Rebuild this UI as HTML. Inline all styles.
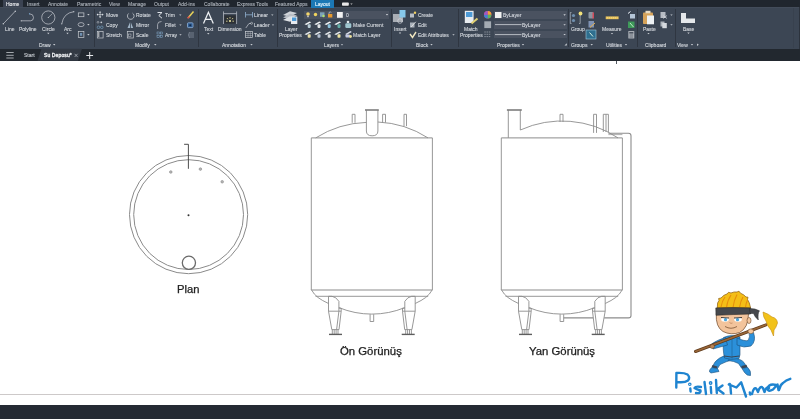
<!DOCTYPE html>
<html><head><meta charset="utf-8">
<style>
*{margin:0;padding:0;box-sizing:border-box}
html,body{width:800px;height:419px;overflow:hidden;background:#fff;font-family:"Liberation Sans",sans-serif}
#tabs{position:absolute;left:0;top:0;width:800px;height:7.5px;background:#20262e}
#ribbon{position:absolute;left:0;top:7px;width:800px;height:41.5px;background:#3c4654;border-top:1px solid #434c5a}
#ftabs{position:absolute;left:0;top:48.5px;width:800px;height:12.7px;background:#22282f}
#status{position:absolute;left:0;top:405px;width:800px;height:14px;background:#242a33}
.t{position:absolute;white-space:nowrap;color:#d6dae0;font-size:5.4px;line-height:7px;will-change:transform;-webkit-text-stroke:0.12px currentColor}
.sep{position:absolute;top:9px;width:1px;height:40px;background:#313846}
svg{position:absolute;left:0;top:0}
.lbl{position:absolute;white-space:nowrap;color:#222;font-size:10px;line-height:12px;transform-origin:0 0;-webkit-text-stroke:0.25px #222}
</style></head><body>
<div id="tabs"></div>
<div id="ribbon"></div>
<div id="ftabs"></div>
<div id="hline" style="position:absolute;left:0;top:394px;width:800px;height:1px;background:#cdc9c9"></div>
<div id="status"></div>
<div style="position:absolute;left:616px;top:61px;width:1px;height:2.5px;background:#555b63"></div>
<!--RIB-->
<div style="position:absolute;left:3px;top:0px;width:20px;height:7px;background:#3b4352;"></div>
<div style="position:absolute;left:311px;top:0px;width:22.5px;height:7.5px;background:#1b78b5;"></div>
<div style="position:absolute;left:793px;top:8px;width:1px;height:40px;background:#38414e;"></div>
<div style="position:absolute;left:798.5px;top:7px;width:1.5px;height:41.5px;background:#2c333d;"></div>
<div style="position:absolute;left:94px;top:9px;width:1px;height:38px;background:#2f3641;"></div>
<div style="position:absolute;left:197.8px;top:9px;width:1px;height:38px;background:#2f3641;"></div>
<div style="position:absolute;left:276.6px;top:9px;width:1px;height:38px;background:#2f3641;"></div>
<div style="position:absolute;left:390.8px;top:9px;width:1px;height:38px;background:#2f3641;"></div>
<div style="position:absolute;left:458.2px;top:9px;width:1px;height:38px;background:#2f3641;"></div>
<div style="position:absolute;left:567.9px;top:9px;width:1px;height:38px;background:#2f3641;"></div>
<div style="position:absolute;left:637.4px;top:9px;width:1px;height:38px;background:#2f3641;"></div>
<div style="position:absolute;left:675px;top:9px;width:1px;height:38px;background:#2f3641;"></div>
<div style="position:absolute;left:303.8px;top:11px;width:85.2px;height:7.6px;background:#4a5260;"></div>
<div style="position:absolute;left:493.6px;top:11.2px;width:73.2px;height:7.5px;background:#4a5260;"></div>
<div style="position:absolute;left:493.6px;top:21px;width:73.2px;height:7.600000000000001px;background:#4a5260;"></div>
<div style="position:absolute;left:493.6px;top:30.6px;width:73.2px;height:7.899999999999999px;background:#4a5260;"></div>
<svg id="rib" width="800" height="62" viewBox="0 0 800 62" style="position:absolute;left:0;top:0">
<rect x="342" y="2.5" width="6.8" height="3.2" rx="0.8" fill="#e8e8e8"/>
<path d="M350.3,3.4 L352.7,3.4 L351.5,4.8 Z" fill="#ccc"/>
<path d="M53.0,44.1 L55.400000000000006,44.1 L54.2,45.5 Z" fill="#c9cdd3"/>
<path d="M47.099999999999994,32.8 L49.5,32.8 L48.3,34.199999999999996 Z" fill="#c9cdd3"/>
<path d="M66.3,32.8 L68.7,32.8 L67.5,34.199999999999996 Z" fill="#c9cdd3"/>
<path d="M3.3,23.8 L15.3,11.2" stroke="#c8ccd2" stroke-width="0.7"/>
<circle cx="3.3" cy="23.8" r="0.7" fill="#c8ccd2"/><circle cx="15.3" cy="11.2" r="0.7" fill="#c8ccd2"/>
<path d="M21.2,20.8 L30.5,20.8 Q33.5,20.8 33.5,17.5 Q33.5,14 29.5,13.8" fill="none" stroke="#c8ccd2" stroke-width="0.7"/>
<circle cx="21.2" cy="20.8" r="0.6" fill="#c8ccd2"/><circle cx="29.5" cy="13.8" r="0.6" fill="#7fb2e0"/>
<circle cx="48.3" cy="17.5" r="6.6" fill="none" stroke="#c8ccd2" stroke-width="0.7"/>
<path d="M48.3,17.5 L52.5,13.5" stroke="#c8ccd2" stroke-width="0.6"/><circle cx="48.3" cy="17.5" r="0.6" fill="#c8ccd2"/>
<path d="M61.8,23.8 Q63.5,13 73.8,11.7" fill="none" stroke="#c8ccd2" stroke-width="0.7"/>
<circle cx="61.8" cy="23.8" r="0.6" fill="#c8ccd2"/><circle cx="73.8" cy="11.7" r="0.6" fill="#c8ccd2"/>
<rect x="78.3" y="12.9" width="5.6" height="3.8" fill="none" stroke="#c8ccd2" stroke-width="0.7"/>
<ellipse cx="81.1" cy="24.6" rx="3" ry="2" fill="none" stroke="#c8ccd2" stroke-width="0.7"/>
<rect x="78.3" y="31.4" width="5.6" height="6" fill="none" stroke="#c8ccd2" stroke-width="0.7"/><rect x="80" y="33" width="2.2" height="2.8" fill="#6f8fb0"/>
<path d="M87.2,14.1 L89.60000000000001,14.1 L88.4,15.5 Z" fill="#c9cdd3"/>
<path d="M87.2,24.099999999999998 L89.60000000000001,24.099999999999998 L88.4,25.5 Z" fill="#c9cdd3"/>
<path d="M87.2,34.1 L89.60000000000001,34.1 L88.4,35.5 Z" fill="#c9cdd3"/>
<path d="M179.10000000000002,14.4 L181.5,14.4 L180.3,15.8 Z" fill="#c9cdd3"/>
<path d="M179.3,24.4 L181.7,24.4 L180.5,25.8 Z" fill="#c9cdd3"/>
<path d="M179.3,34.199999999999996 L181.7,34.199999999999996 L180.5,35.599999999999994 Z" fill="#c9cdd3"/>
<path d="M154.10000000000002,44.1 L156.5,44.1 L155.3,45.5 Z" fill="#c9cdd3"/>
<path d="M100.1,11.8 L100.1,17.4 M97.2,14.6 L103,14.6" stroke="#e3e6ea" stroke-width="0.6"/><path d="M100.1,11.2 L101.3,12.6 L98.9,12.6Z M100.1,18 L101.3,16.6 L98.9,16.6Z M96.6,14.6 L98,13.4 L98,15.8Z M103.6,14.6 L102.2,13.4 L102.2,15.8Z" fill="#e3e6ea"/>
<circle cx="98" cy="22.3" r="0.9" fill="none" stroke="#c9cdd3" stroke-width="0.5"/><circle cx="101.3" cy="22.3" r="0.9" fill="#c9cdd3"/><circle cx="98.5" cy="27.3" r="1.3" fill="none" stroke="#7aa6c8" stroke-width="0.6"/><circle cx="101.8" cy="27.3" r="1.3" fill="none" stroke="#7aa6c8" stroke-width="0.6"/>
<rect x="97.3" y="31.5" width="5.8" height="6.5" fill="none" stroke="#c8ccd2" stroke-width="0.7"/><path d="M98.8,32 L98.8,37" stroke="#e0e0e0" stroke-width="0.9"/>
<path d="M132.5,13.2 A3.3,3.3 0 1,1 128.6,13.5" fill="none" stroke="#c8ccd2" stroke-width="0.8"/>
<path d="M127.5,28 L130,22.3 L130,28 Z M130.8,28 L130.8,22.3 L133.2,28 Z" fill="#9fb3c5"/>
<rect x="127.3" y="31.5" width="6" height="6.5" fill="none" stroke="#c8ccd2" stroke-width="0.7"/><rect x="128.5" y="34" width="2.5" height="2.5" fill="none" stroke="#c8ccd2" stroke-width="0.5"/>
<path d="M157.5,12.5 L162,12.5 L158.8,15.5 L162,18.2" fill="none" stroke="#dfe3e8" stroke-width="1"/>
<path d="M157.6,29 L157.6,24.5 Q157.6,21.5 161.5,21.5" fill="none" stroke="#c8ccd2" stroke-width="0.7"/>
<rect x="157" y="32" width="2.3" height="2" fill="none" stroke="#86aed0" stroke-width="0.5"/><rect x="160.3" y="32" width="2.3" height="2" fill="none" stroke="#86aed0" stroke-width="0.5"/><rect x="157" y="35.3" width="2.3" height="2" fill="none" stroke="#86aed0" stroke-width="0.5"/><rect x="160.3" y="35.3" width="2.3" height="2" fill="none" stroke="#86aed0" stroke-width="0.5"/>
<path d="M188,18 L193.5,11.5" stroke="#e7d25a" stroke-width="1.5"/><path d="M187.5,18.3 L189.5,16.5" stroke="#d94a4a" stroke-width="1.4"/>
<rect x="187.5" y="22.8" width="5.5" height="4.8" rx="0.8" fill="#2f5a8f" stroke="#9cc0e8" stroke-width="0.7"/><circle cx="190.2" cy="25.2" r="1" fill="#0f2a4a"/>
<path d="M189,33 L194,33 M188.5,35 L194,35 M189,37 L194,37" stroke="#7c8694" stroke-width="0.9"/><path d="M189.5,32 Q187.3,35 189.5,38" fill="none" stroke="#7c8694" stroke-width="0.7"/>
<path d="M203.5,23.5 L208.4,12.2 L213.3,23.5 M205.3,19.3 L211.5,19.3" fill="none" stroke="#eef1f4" stroke-width="1.25"/>
<path d="M207.10000000000002,33.0 L209.5,33.0 L208.3,34.4 Z" fill="#c9cdd3"/>
<rect x="224.3" y="15.3" width="11.5" height="8.3" fill="#2c3035"/>
<path d="M223.5,11.4 L223.5,24 M236.6,11.4 L236.6,24 M223.5,13.6 L236.6,13.6" fill="none" stroke="#b9bec5" stroke-width="0.75"/>
<path d="M230,17 L230,18.6 M227,18 L227.9,19.3 M233,18 L232.1,19.3 M226,21.2 L227.6,21.2 M234,21.2 L232.4,21.2" stroke="#e8e2a0" stroke-width="0.8"/><circle cx="230" cy="21" r="1.1" fill="#e8e2a0"/>
<path d="M245.5,12 L245.5,17.5 M252.5,12 L252.5,17.5 M245.5,14.8 L252.5,14.8" stroke="#8fb0cf" stroke-width="0.8"/>
<path d="M245.8,28 L249,23.5 L251,23.5" fill="none" stroke="#c8ccd2" stroke-width="0.7"/><circle cx="251.6" cy="23.3" r="1" fill="none" stroke="#c8ccd2" stroke-width="0.6"/>
<rect x="245.5" y="31.5" width="7" height="6" fill="none" stroke="#c8ccd2" stroke-width="0.7"/><path d="M245.5,33.5 L252.5,33.5 M245.5,35.5 L252.5,35.5 M248,31.5 L248,37.5 M250.3,31.5 L250.3,37.5" stroke="#c8ccd2" stroke-width="0.4"/>
<path d="M271.1,14.4 L273.5,14.4 L272.3,15.8 Z" fill="#c9cdd3"/>
<path d="M271.8,24.4 L274.2,24.4 L273,25.8 Z" fill="#c9cdd3"/>
<path d="M250.3,44.1 L252.7,44.1 L251.5,45.5 Z" fill="#c9cdd3"/>
<path d="M283,15 L290,11.3 L297,13 L290,16.7 Z" fill="#cfd3d8"/><path d="M283,17.5 L290,13.8 L297,15.5 L290,19.2 Z" fill="#b9bec5"/><path d="M283,20 L290,16.3 L297,18 L290,21.7 Z" fill="#dde1e5"/>
<rect x="291" y="16.5" width="6.3" height="7.5" fill="#e6eaef"/><rect x="292" y="17.5" width="4.3" height="3.5" fill="#4d9ad6"/>
<circle cx="308" cy="14" r="1.8" fill="#f4d76b"/><rect x="307.3" y="15.8" width="1.4" height="1.4" fill="#ddd"/>
<circle cx="315.5" cy="14.5" r="1.7" fill="#f0d45e"/>
<rect x="320" y="12.3" width="4.5" height="4.5" fill="#7da2b8"/><circle cx="323.5" cy="16" r="1.2" fill="#aee06a"/>
<rect x="328" y="14" width="4.3" height="3.5" fill="#e89a2e"/><path d="M329,14 L329,12.5 Q330.2,11.3 331.4,12.5" fill="none" stroke="#ddd" stroke-width="0.6"/>
<rect x="337" y="12" width="5.8" height="5.8" fill="#f2f2f2"/>
<path d="M385.8,14.0 L388.2,14.0 L387,15.4 Z" fill="#d0d4da"/>
<path d="M304.5,24.2 L309.5,21.5 L311.3,22.3 L306.3,25Z" fill="#eef1f3"/><rect x="307.7" y="24.3" width="3" height="3.6" rx="0.8" fill="#b9cdd6"/>
<path d="M304.5,34.2 L309.5,31.5 L311.3,32.3 L306.3,35Z" fill="#e3e7ea"/><rect x="307.7" y="34.3" width="3" height="3.4" rx="0.8" fill="#e6dca6"/>
<path d="M314.3,24.2 L319.3,21.5 L321.1,22.3 L316.1,25Z" fill="#eef1f3"/><rect x="317.5" y="24.3" width="3" height="3.6" rx="0.8" fill="#dfe3e6"/>
<path d="M314.3,34.2 L319.3,31.5 L321.1,32.3 L316.1,35Z" fill="#e3e7ea"/><rect x="317.5" y="34.3" width="3" height="3.4" rx="0.8" fill="#b3c0d2"/>
<path d="M324.5,24.2 L329.5,21.5 L331.3,22.3 L326.3,25Z" fill="#eef1f3"/><rect x="327.7" y="24.3" width="3" height="3.6" rx="0.8" fill="#8cc3dd"/>
<path d="M324.5,34.2 L329.5,31.5 L331.3,32.3 L326.3,35Z" fill="#e3e7ea"/><rect x="327.7" y="34.3" width="3" height="3.4" rx="0.8" fill="#d6dadd"/>
<path d="M334.3,24.2 L339.3,21.5 L341.1,22.3 L336.1,25Z" fill="#eef1f3"/><rect x="337.5" y="24.3" width="3" height="3.6" rx="0.8" fill="#63aea6"/>
<path d="M334.3,34.2 L339.3,31.5 L341.1,32.3 L336.1,35Z" fill="#e3e7ea"/><rect x="337.5" y="34.3" width="3" height="3.4" rx="0.8" fill="#ece2a0"/>
<circle cx="348" cy="22" r="1.3" fill="#dfe6ea"/><rect x="345.3" y="23.2" width="6" height="4.8" rx="1.2" fill="#9ec5cf"/><path d="M345.3,34 L350.5,31 L351.8,32 L346.5,35Z" fill="#d9dde8"/><rect x="345.5" y="34.5" width="4.5" height="3" rx="0.8" fill="#c3c8e0"/><circle cx="350.5" cy="36.5" r="1.4" fill="#eadf9a"/>
<path d="M340.8,44.199999999999996 L343.2,44.199999999999996 L342,45.599999999999994 Z" fill="#c9cdd3"/>
<rect x="393" y="14" width="10" height="8" fill="#a9aeb5"/><rect x="399.5" y="10" width="6" height="7.5" fill="#86c8ea"/><circle cx="400" cy="21" r="2.3" fill="none" stroke="#d5d9de" stroke-width="0.7"/>
<path d="M398.8,32.6 L401.2,32.6 L400,34.0 Z" fill="#c9cdd3"/>
<rect x="410" y="13.5" width="4" height="4" fill="#b8bec6"/><circle cx="415" cy="12.8" r="1.2" fill="#f0d060"/>
<rect x="410" y="22.5" width="4.5" height="5" fill="#aab1ba"/><path d="M411,27 L415.8,21.8" stroke="#e6e6e6" stroke-width="0.9"/>
<path d="M410,34 L412.5,37.5 L416,32" fill="none" stroke="#f0e6c0" stroke-width="1.4"/>
<path d="M452.3,34.199999999999996 L454.7,34.199999999999996 L453.5,35.599999999999994 Z" fill="#c9cdd3"/>
<path d="M430.3,44.1 L432.7,44.1 L431.5,45.5 Z" fill="#c9cdd3"/>
<rect x="464.8" y="10.8" width="8.8" height="12.2" fill="#e8ecf0"/><rect x="466" y="12" width="6.4" height="5" fill="#4d9ad6"/><path d="M471.5,23.5 L477.5,18.5" stroke="#e0cf70" stroke-width="2"/>
<circle cx="487.7" cy="14.8" r="3.7" fill="#d84f6a"/><path d="M487.7,14.8 L487.7,11.1 A3.7,3.7 0 0,1 491.4,14.8Z" fill="#f2a03a"/><path d="M487.7,14.8 L491.4,14.8 A3.7,3.7 0 0,1 487.7,18.5Z" fill="#5bb85b"/><path d="M487.7,14.8 L487.7,18.5 A3.7,3.7 0 0,1 484,14.8Z" fill="#3c82d8"/><path d="M487.7,14.8 L484,14.8 A3.7,3.7 0 0,1 487.7,11.1Z" fill="#9b59c8"/>
<rect x="484.3" y="21.3" width="6.8" height="6.8" fill="#a4abb3"/>
<path d="M484.3,32 L491,32 M484.3,34.3 L491,34.3 M484.3,36.6 L491,36.6" stroke="#9aa2ac" stroke-width="0.8" stroke-dasharray="1.5,0.7"/>
<path d="M563.4,14.35 L565.8000000000001,14.35 L564.6,15.75 Z" fill="#d0d4da"/>
<path d="M563.4,24.2 L565.8000000000001,24.2 L564.6,25.6 Z" fill="#d0d4da"/>
<path d="M563.4,33.949999999999996 L565.8000000000001,33.949999999999996 L564.6,35.349999999999994 Z" fill="#d0d4da"/>
<rect x="495" y="12" width="6.5" height="6" fill="#f2f2f2"/>
<path d="M495,24.6 L521.5,24.6 M495,34.6 L521.5,34.6" stroke="#d0d4da" stroke-width="0.8"/>
<path d="M521.8,44.1 L524.2,44.1 L523,45.5 Z" fill="#c9cdd3"/>
<path d="M564.5,45.5 L566.8,45.5 L566.8,43.2Z" fill="#c9cdd3"/>
<path d="M571.5,12.5 L570.3,12.5 L570.3,23.5 L571.5,23.5 M579,12.5 L580.2,12.5 L580.2,23.5 L579,23.5" fill="none" stroke="#c8ccd2" stroke-width="0.6"/>
<circle cx="573.5" cy="15.5" r="1.6" fill="#6f8fae"/><circle cx="573.5" cy="20.5" r="1.6" fill="#6f8fae"/><circle cx="580.5" cy="13.5" r="1.9" fill="#f2e27a"/>
<rect x="588.5" y="12" width="5" height="6.5" rx="1" fill="#8a94a0"/><rect x="592.5" y="12.5" width="1.5" height="6" fill="#d14a5a"/>
<rect x="588.5" y="21" width="5.5" height="6.5" fill="#7f92b3"/><path d="M590,27.5 L595,23" stroke="#e8b04a" stroke-width="1"/>
<rect x="586" y="30" width="10" height="9" fill="#2f6f8f" stroke="#9ec8de" stroke-width="0.6"/><path d="M589.5,32.5 L593,36.5" stroke="#d8f0e0" stroke-width="1"/>
<path d="M590.5,44.1 L592.9000000000001,44.1 L591.7,45.5 Z" fill="#c9cdd3"/>
<rect x="605.7" y="16.4" width="12.9" height="2.8" fill="#e9c45c"/><path d="M607,17.8 L617.5,17.8" stroke="#f8e8a8" stroke-width="0.6" stroke-dasharray="1,1"/>
<path d="M610.8,32.9 L613.2,32.9 L612,34.3 Z" fill="#c9cdd3"/>
<rect x="630" y="14" width="5" height="4.5" fill="#b5c6d8"/><path d="M628,13.5 L630.5,11.5" stroke="#e8eef5" stroke-width="1"/>
<rect x="628" y="21.5" width="6.5" height="6.5" fill="#3f9a5a"/><path d="M630,23 L633.5,27" stroke="#c8f0d0" stroke-width="0.9"/>
<rect x="628.3" y="31" width="6" height="7.5" rx="0.6" fill="#a9aeb5"/><rect x="629.3" y="32" width="4" height="1.6" fill="#4d5561"/><path d="M629.5,35 L633,35 M629.5,37 L633,37" stroke="#5d6571" stroke-width="0.8"/>
<path d="M624.8,44.1 L627.2,44.1 L626,45.5 Z" fill="#c9cdd3"/>
<rect x="643" y="12.5" width="10" height="11.5" rx="0.8" fill="#d6a35a"/><rect x="645.5" y="10.8" width="5" height="2.5" fill="#e8dcc4"/><path d="M647,15.5 L654,15.5 L654,24.3 L647,24.3Z" fill="#eef2f5"/>
<path d="M647.3,32.9 L649.7,32.9 L648.5,34.3 Z" fill="#c9cdd3"/>
<rect x="660.5" y="12" width="5" height="6" fill="#b7bcc3"/><path d="M663,15.5 L667,18.5 M667,15.5 L663,18.5" stroke="#d5d9de" stroke-width="0.7"/>
<rect x="660.5" y="21.5" width="4" height="5" fill="#aeb4bb"/><rect x="662.3" y="23" width="4.5" height="5.2" fill="#d5d9de"/>
<path d="M670.3,14.4 L672.7,14.4 L671.5,15.8 Z" fill="#c9cdd3"/>
<path d="M670.3,24.2 L672.7,24.2 L671.5,25.6 Z" fill="#c9cdd3"/>
<path d="M681,13 L686,13 L686,18.5 L695,18.5 L695,23 L681,23 Z" fill="#e4e7ea"/>
<path d="M687.3,32.6 L689.7,32.6 L688.5,34.0 Z" fill="#c9cdd3"/>
<path d="M690.8,44.1 L693.2,44.1 L692,45.5 Z" fill="#c9cdd3"/>
<path d="M697,43.5 L698.8,44.7 L697,45.9Z" fill="#c9cdd3"/>
<path d="M6.3,52.5 L13.7,52.5 M6.3,55.3 L13.7,55.3 M6.3,58 L13.7,58" stroke="#cfd3d8" stroke-width="0.75"/>
<path d="M37.5,60.8 L41.5,48.8 L82,48.8 L78,60.8 Z" fill="#333a44"/>
<path d="M74.6,53.8 L77.6,57 M77.6,53.8 L74.6,57" stroke="#b8bdc4" stroke-width="0.7"/>
<path d="M86.3,55.5 L93.1,55.5 M89.7,52 L89.7,59" stroke="#e6e8eb" stroke-width="1"/>
</svg>
<div class="t" style="left:5.6px;top:1.90px;font-size:5.0px;line-height:5.0px;color:#eef0f3;">Home</div>
<div class="t" style="left:27.0px;top:1.90px;font-size:5.0px;line-height:5.0px;color:#aab0b8;">Insert</div>
<div class="t" style="left:47.8px;top:1.90px;font-size:5.0px;line-height:5.0px;color:#aab0b8;">Annotate</div>
<div class="t" style="left:77.3px;top:1.90px;font-size:5.0px;line-height:5.0px;color:#aab0b8;">Parametric</div>
<div class="t" style="left:109.0px;top:1.90px;font-size:5.0px;line-height:5.0px;color:#aab0b8;">View</div>
<div class="t" style="left:127.7px;top:1.90px;font-size:5.0px;line-height:5.0px;color:#aab0b8;">Manage</div>
<div class="t" style="left:153.7px;top:1.90px;font-size:5.0px;line-height:5.0px;color:#aab0b8;">Output</div>
<div class="t" style="left:178.0px;top:1.90px;font-size:5.0px;line-height:5.0px;color:#aab0b8;">Add-ins</div>
<div class="t" style="left:204.0px;top:1.90px;font-size:5.0px;line-height:5.0px;color:#aab0b8;">Collaborate</div>
<div class="t" style="left:237.0px;top:1.90px;font-size:5.0px;line-height:5.0px;color:#aab0b8;">Express Tools</div>
<div class="t" style="left:274.8px;top:1.90px;font-size:5.0px;line-height:5.0px;color:#aab0b8;">Featured Apps</div>
<div class="t" style="left:315.2px;top:1.90px;font-size:5.0px;line-height:5.0px;color:#e6f6ff;">Layout</div>
<div class="t" style="left:4.9px;top:27.00px;font-size:5.0px;line-height:5.0px;color:#d3d7dc;">Line</div>
<div class="t" style="left:18.8px;top:27.00px;font-size:5.0px;line-height:5.0px;color:#d3d7dc;">Polyline</div>
<div class="t" style="left:42.0px;top:27.00px;font-size:5.0px;line-height:5.0px;color:#d3d7dc;">Circle</div>
<div class="t" style="left:64.0px;top:27.00px;font-size:5.0px;line-height:5.0px;color:#d3d7dc;">Arc</div>
<div class="t" style="left:39.0px;top:42.70px;font-size:5.0px;line-height:5.0px;color:#d3d7dc;">Draw</div>
<div class="t" style="left:105.5px;top:13.00px;font-size:5.0px;line-height:5.0px;color:#d3d7dc;">Move</div>
<div class="t" style="left:105.5px;top:23.00px;font-size:5.0px;line-height:5.0px;color:#d3d7dc;">Copy</div>
<div class="t" style="left:105.5px;top:32.80px;font-size:5.0px;line-height:5.0px;color:#d3d7dc;">Stretch</div>
<div class="t" style="left:136.0px;top:13.00px;font-size:5.0px;line-height:5.0px;color:#d3d7dc;">Rotate</div>
<div class="t" style="left:136.0px;top:23.00px;font-size:5.0px;line-height:5.0px;color:#d3d7dc;">Mirror</div>
<div class="t" style="left:136.0px;top:32.80px;font-size:5.0px;line-height:5.0px;color:#d3d7dc;">Scale</div>
<div class="t" style="left:165.0px;top:13.00px;font-size:5.0px;line-height:5.0px;color:#d3d7dc;">Trim</div>
<div class="t" style="left:165.0px;top:23.00px;font-size:5.0px;line-height:5.0px;color:#d3d7dc;">Fillet</div>
<div class="t" style="left:165.0px;top:32.80px;font-size:5.0px;line-height:5.0px;color:#d3d7dc;">Array</div>
<div class="t" style="left:135.0px;top:42.70px;font-size:5.0px;line-height:5.0px;color:#d3d7dc;">Modify</div>
<div class="t" style="left:204.0px;top:27.10px;font-size:5.0px;line-height:5.0px;color:#d3d7dc;">Text</div>
<div class="t" style="left:218.0px;top:27.10px;font-size:5.0px;line-height:5.0px;color:#d3d7dc;">Dimension</div>
<div class="t" style="left:254.0px;top:13.00px;font-size:5.0px;line-height:5.0px;color:#d3d7dc;">Linear</div>
<div class="t" style="left:254.0px;top:23.00px;font-size:5.0px;line-height:5.0px;color:#d3d7dc;">Leader</div>
<div class="t" style="left:254.0px;top:32.80px;font-size:5.0px;line-height:5.0px;color:#d3d7dc;">Table</div>
<div class="t" style="left:222.0px;top:42.70px;font-size:5.0px;line-height:5.0px;color:#d3d7dc;">Annotation</div>
<div class="t" style="left:285.0px;top:27.30px;font-size:5.0px;line-height:5.0px;color:#d3d7dc;">Layer</div>
<div class="t" style="left:279.0px;top:33.30px;font-size:5.0px;line-height:5.0px;color:#d3d7dc;">Properties</div>
<div class="t" style="left:345.5px;top:13.00px;font-size:5.0px;line-height:5.0px;color:#d0d4da;">0</div>
<div class="t" style="left:353.0px;top:22.60px;font-size:5.0px;line-height:5.0px;color:#d3d7dc;">Make Current</div>
<div class="t" style="left:353.0px;top:32.90px;font-size:5.0px;line-height:5.0px;color:#d3d7dc;">Match Layer</div>
<div class="t" style="left:324.0px;top:42.80px;font-size:5.0px;line-height:5.0px;color:#d3d7dc;">Layers</div>
<div class="t" style="left:394.0px;top:26.90px;font-size:5.0px;line-height:5.0px;color:#d3d7dc;">Insert</div>
<div class="t" style="left:418.0px;top:13.00px;font-size:5.0px;line-height:5.0px;color:#d3d7dc;">Create</div>
<div class="t" style="left:418.0px;top:22.60px;font-size:5.0px;line-height:5.0px;color:#d3d7dc;">Edit</div>
<div class="t" style="left:418.0px;top:32.80px;font-size:5.0px;line-height:5.0px;color:#d3d7dc;">Edit Attributes</div>
<div class="t" style="left:415.6px;top:42.70px;font-size:5.0px;line-height:5.0px;color:#d3d7dc;">Block</div>
<div class="t" style="left:464.0px;top:26.90px;font-size:5.0px;line-height:5.0px;color:#d3d7dc;">Match</div>
<div class="t" style="left:460.0px;top:33.10px;font-size:5.0px;line-height:5.0px;color:#d3d7dc;">Properties</div>
<div class="t" style="left:503.0px;top:13.00px;font-size:5.0px;line-height:5.0px;color:#d0d4da;">ByLayer</div>
<div class="t" style="left:522.3px;top:22.80px;font-size:5.0px;line-height:5.0px;color:#d0d4da;">ByLayer</div>
<div class="t" style="left:522.3px;top:32.80px;font-size:5.0px;line-height:5.0px;color:#d0d4da;">ByLayer</div>
<div class="t" style="left:496.6px;top:42.70px;font-size:5.0px;line-height:5.0px;color:#d3d7dc;">Properties</div>
<div class="t" style="left:570.7px;top:26.80px;font-size:5.0px;line-height:5.0px;color:#d3d7dc;">Group</div>
<div class="t" style="left:571.2px;top:42.70px;font-size:5.0px;line-height:5.0px;color:#d3d7dc;">Groups</div>
<div class="t" style="left:602.3px;top:26.80px;font-size:5.0px;line-height:5.0px;color:#d3d7dc;">Measure</div>
<div class="t" style="left:605.7px;top:42.70px;font-size:5.0px;line-height:5.0px;color:#d3d7dc;">Utilities</div>
<div class="t" style="left:642.8px;top:26.80px;font-size:5.0px;line-height:5.0px;color:#d3d7dc;">Paste</div>
<div class="t" style="left:645.0px;top:42.70px;font-size:5.0px;line-height:5.0px;color:#d3d7dc;">Clipboard</div>
<div class="t" style="left:683.0px;top:26.60px;font-size:5.0px;line-height:5.0px;color:#d3d7dc;">Base</div>
<div class="t" style="left:677.0px;top:42.70px;font-size:5.0px;line-height:5.0px;color:#d3d7dc;">View</div>
<div class="t" style="left:23.7px;top:53.40px;font-size:5.0px;line-height:5.0px;color:#c9cdd3;">Start</div>
<div class="t" style="left:44.4px;top:53.40px;font-size:5.0px;line-height:5.0px;color:#f2f4f6;-webkit-text-stroke:0.3px #f2f4f6;letter-spacing:0.12px">Su Deposu*</div>
<!--/RIB-->
<svg id="draw" width="800" height="419" viewBox="0 0 800 419" style="top:0">
<circle cx="188.6" cy="214.6" r="59.1" fill="none" stroke="#8a8a8a" stroke-width="1"/>
<circle cx="188.6" cy="214.6" r="54.9" fill="none" stroke="#8a8a8a" stroke-width="1"/>
<circle cx="188.9" cy="262.8" r="6.6" fill="none" stroke="#6a6a6a" stroke-width="1.3"/>
<circle cx="188.5" cy="215.2" r="1" fill="#333"/>
<path d="M184.1,144.3 L188.4,144.3 L188.4,168.8" fill="none" stroke="#3a3a3a" stroke-width="0.9"/>
<circle cx="170.8" cy="172" r="1.3" fill="#b5b5b5" stroke="#8a8a8a" stroke-width="0.6"/>
<circle cx="200.4" cy="169.1" r="1.3" fill="#b5b5b5" stroke="#8a8a8a" stroke-width="0.6"/>
<circle cx="222.2" cy="181.8" r="1.3" fill="#b5b5b5" stroke="#8a8a8a" stroke-width="0.6"/>
<path d="M 311.30,137.90 L 311.30,289.80" fill="none" stroke="#8c8c8c" stroke-width="0.9"/>
<path d="M 432.40,137.90 L 432.40,289.80" fill="none" stroke="#8c8c8c" stroke-width="0.9"/>
<path d="M 311.30,137.90 L 432.40,137.90" fill="none" stroke="#8c8c8c" stroke-width="1.0"/>
<path d="M 311.30,290.00 L 432.40,290.00" fill="none" stroke="#8c8c8c" stroke-width="1.1"/>
<path d="M 315.50,296.30 L 428.20,296.30" fill="none" stroke="#8c8c8c" stroke-width="0.9"/>
<path d="M 311.30,289.60 Q 314.00,294.50 318.00,297.50 Q 322.00,300.50 328.50,303.50" fill="none" stroke="#8c8c8c" stroke-width="0.9"/>
<path d="M 432.40,289.60 Q 429.70,294.50 425.70,297.50 Q 421.70,300.50 415.20,303.50" fill="none" stroke="#8c8c8c" stroke-width="0.9"/>
<path d="M338.9,307.6 A86.7,86.7 0 0,0 404.80,307.6" fill="none" stroke="#8c8c8c" stroke-width="0.9"/>
<path d="M 328.50,296.30 L 328.50,311.20" fill="none" stroke="#8c8c8c" stroke-width="0.9"/>
<path d="M 415.20,296.30 L 415.20,311.20" fill="none" stroke="#8c8c8c" stroke-width="0.9"/>
<path d="M 328.50,296.30 L 332.00,296.30 Q 336.00,296.80 338.90,301.30 L 338.90,311.20" fill="none" stroke="#8c8c8c" stroke-width="0.9"/>
<path d="M 415.20,296.30 L 411.70,296.30 Q 407.70,296.80 404.80,301.30 L 404.80,311.20" fill="none" stroke="#8c8c8c" stroke-width="0.9"/>
<path d="M 338.90,308.20 L 341.20,308.20 L 341.20,311.20" fill="none" stroke="#8c8c8c" stroke-width="0.9"/>
<path d="M 404.80,308.20 L 402.50,308.20 L 402.50,311.20" fill="none" stroke="#8c8c8c" stroke-width="0.9"/>
<path d="M 328.50,311.20 L 341.20,311.20" fill="none" stroke="#8c8c8c" stroke-width="0.9"/>
<path d="M 415.20,311.20 L 402.50,311.20" fill="none" stroke="#8c8c8c" stroke-width="0.9"/>
<path d="M 328.50,311.20 L 331.80,329.60" fill="none" stroke="#8c8c8c" stroke-width="0.9"/>
<path d="M 415.20,311.20 L 411.90,329.60" fill="none" stroke="#8c8c8c" stroke-width="0.9"/>
<path d="M 338.90,311.20 L 336.60,329.60" fill="none" stroke="#8c8c8c" stroke-width="0.9"/>
<path d="M 404.80,311.20 L 407.10,329.60" fill="none" stroke="#8c8c8c" stroke-width="0.9"/>
<path d="M 341.20,311.20 L 339.00,329.60" fill="none" stroke="#8c8c8c" stroke-width="0.9"/>
<path d="M 402.50,311.20 L 404.70,329.60" fill="none" stroke="#8c8c8c" stroke-width="0.9"/>
<path d="M 331.80,329.60 L 339.00,329.60" fill="none" stroke="#8c8c8c" stroke-width="0.9"/>
<path d="M 411.90,329.60 L 404.70,329.60" fill="none" stroke="#8c8c8c" stroke-width="0.9"/>
<path d="M 332.30,329.60 L 332.30,334.00 M 334.20,329.60 L 334.20,334.00 M 336.10,329.60 L 336.10,334.00 M 338.00,329.60 L 338.00,334.00" fill="none" stroke="#8c8c8c" stroke-width="0.9"/>
<path d="M 411.40,329.60 L 411.40,334.00 M 409.50,329.60 L 409.50,334.00 M 407.60,329.60 L 407.60,334.00 M 405.70,329.60 L 405.70,334.00" fill="none" stroke="#8c8c8c" stroke-width="0.9"/>
<path d="M 329.00,334.40 L 342.00,334.40" fill="none" stroke="#5e5e5e" stroke-width="1.4"/>
<path d="M 414.70,334.40 L 401.70,334.40" fill="none" stroke="#5e5e5e" stroke-width="1.4"/>
<path d="M 370.10,314.30 L 370.10,321.50 L 373.70,321.50 L 373.70,314.30" fill="none" stroke="#8c8c8c" stroke-width="0.9"/>
<path d="M 501.30,137.90 L 501.30,289.80" fill="none" stroke="#8c8c8c" stroke-width="0.9"/>
<path d="M 622.40,137.90 L 622.40,289.80" fill="none" stroke="#8c8c8c" stroke-width="0.9"/>
<path d="M 501.30,137.90 L 622.40,137.90" fill="none" stroke="#8c8c8c" stroke-width="1.0"/>
<path d="M 501.30,290.00 L 622.40,290.00" fill="none" stroke="#8c8c8c" stroke-width="1.1"/>
<path d="M 505.50,296.30 L 618.20,296.30" fill="none" stroke="#8c8c8c" stroke-width="0.9"/>
<path d="M 501.30,289.60 Q 504.00,294.50 508.00,297.50 Q 512.00,300.50 518.50,303.50" fill="none" stroke="#8c8c8c" stroke-width="0.9"/>
<path d="M 622.40,289.60 Q 619.70,294.50 615.70,297.50 Q 611.70,300.50 605.20,303.50" fill="none" stroke="#8c8c8c" stroke-width="0.9"/>
<path d="M528.9,307.6 A86.7,86.7 0 0,0 594.80,307.6" fill="none" stroke="#8c8c8c" stroke-width="0.9"/>
<path d="M 518.50,296.30 L 518.50,311.20" fill="none" stroke="#8c8c8c" stroke-width="0.9"/>
<path d="M 605.20,296.30 L 605.20,311.20" fill="none" stroke="#8c8c8c" stroke-width="0.9"/>
<path d="M 518.50,296.30 L 522.00,296.30 Q 526.00,296.80 528.90,301.30 L 528.90,311.20" fill="none" stroke="#8c8c8c" stroke-width="0.9"/>
<path d="M 605.20,296.30 L 601.70,296.30 Q 597.70,296.80 594.80,301.30 L 594.80,311.20" fill="none" stroke="#8c8c8c" stroke-width="0.9"/>
<path d="M 528.90,308.20 L 531.20,308.20 L 531.20,311.20" fill="none" stroke="#8c8c8c" stroke-width="0.9"/>
<path d="M 594.80,308.20 L 592.50,308.20 L 592.50,311.20" fill="none" stroke="#8c8c8c" stroke-width="0.9"/>
<path d="M 518.50,311.20 L 531.20,311.20" fill="none" stroke="#8c8c8c" stroke-width="0.9"/>
<path d="M 605.20,311.20 L 592.50,311.20" fill="none" stroke="#8c8c8c" stroke-width="0.9"/>
<path d="M 518.50,311.20 L 521.80,329.60" fill="none" stroke="#8c8c8c" stroke-width="0.9"/>
<path d="M 605.20,311.20 L 601.90,329.60" fill="none" stroke="#8c8c8c" stroke-width="0.9"/>
<path d="M 528.90,311.20 L 526.60,329.60" fill="none" stroke="#8c8c8c" stroke-width="0.9"/>
<path d="M 594.80,311.20 L 597.10,329.60" fill="none" stroke="#8c8c8c" stroke-width="0.9"/>
<path d="M 531.20,311.20 L 529.00,329.60" fill="none" stroke="#8c8c8c" stroke-width="0.9"/>
<path d="M 592.50,311.20 L 594.70,329.60" fill="none" stroke="#8c8c8c" stroke-width="0.9"/>
<path d="M 521.80,329.60 L 529.00,329.60" fill="none" stroke="#8c8c8c" stroke-width="0.9"/>
<path d="M 601.90,329.60 L 594.70,329.60" fill="none" stroke="#8c8c8c" stroke-width="0.9"/>
<path d="M 522.30,329.60 L 522.30,334.00 M 524.20,329.60 L 524.20,334.00 M 526.10,329.60 L 526.10,334.00 M 528.00,329.60 L 528.00,334.00" fill="none" stroke="#8c8c8c" stroke-width="0.9"/>
<path d="M 601.40,329.60 L 601.40,334.00 M 599.50,329.60 L 599.50,334.00 M 597.60,329.60 L 597.60,334.00 M 595.70,329.60 L 595.70,334.00" fill="none" stroke="#8c8c8c" stroke-width="0.9"/>
<path d="M 519.00,334.40 L 532.00,334.40" fill="none" stroke="#5e5e5e" stroke-width="1.4"/>
<path d="M 604.70,334.40 L 591.70,334.40" fill="none" stroke="#5e5e5e" stroke-width="1.4"/>
<path d="M 560.10,314.30 L 560.10,321.50 L 563.70,321.50 L 563.70,314.30" fill="none" stroke="#8c8c8c" stroke-width="0.9"/>
<path d="M315.7,137.9 A101.2,101.2 0 0,1 366.4,122.4" fill="none" stroke="#8c8c8c" stroke-width="0.9"/>
<path d="M377.9,122.0 A101.2,101.2 0 0,1 428,137.9" fill="none" stroke="#8c8c8c" stroke-width="0.9"/>
<path d="M366.4,110 L366.4,131 Q366.4,135.8 372.1,135.8 Q377.9,135.8 377.9,131 L377.9,110" fill="none" stroke="#8c8c8c" stroke-width="0.9"/>
<path d="M365,110 L378.8,110" fill="none" stroke="#7e7e7e" stroke-width="1.6"/>
<path d="M352.2,122.8 L352.2,114.3 L355,114.3 L355,122.8" fill="none" stroke="#8c8c8c" stroke-width="0.9"/>
<path d="M382.6,122.6 L382.6,114.3 L385.5,114.3 L385.5,122.6" fill="none" stroke="#8c8c8c" stroke-width="0.9"/>
<path d="M404,126.2 L404,114.3 L406.5,114.3 L406.5,126.2" fill="none" stroke="#8c8c8c" stroke-width="0.9"/>
<path d="M508.3,110 L508.3,137.9" fill="none" stroke="#8c8c8c" stroke-width="0.9"/>
<path d="M520.3,110 L520.3,130" fill="none" stroke="#8c8c8c" stroke-width="0.9"/>
<path d="M506.9,110 L521.8,110" fill="none" stroke="#7e7e7e" stroke-width="1.6"/>
<path d="M520.3,130 A101.2,101.2 0 0,1 618,137.9" fill="none" stroke="#8c8c8c" stroke-width="0.9"/>
<path d="M560,122 L560,114.3 L563,114.3 L563,122" fill="none" stroke="#8c8c8c" stroke-width="0.9"/>
<path d="M593.6,132.9 L593.6,114.3 L596.5,114.3 L596.5,132.9" fill="none" stroke="#8c8c8c" stroke-width="0.9"/>
<path d="M603.3,132 L603.3,114.3 L608.4,114.3 L608.4,132 M606,114.3 L606,132" fill="none" stroke="#8c8c8c" stroke-width="0.9"/>
<path d="M608.4,133.3 L628.5,133.3 Q631,133.3 631,135.8 L631,315.4 Q631,317.9 628.5,317.9 L604.2,317.9 M593.2,317.9 L563.7,317.9" fill="none" stroke="#8c8c8c" stroke-width="1.1"/>
<path d="M608.4,134.6 L622.4,134.6" fill="none" stroke="#8c8c8c" stroke-width="0.7"/>
</svg>
<div class="lbl" style="left:177px;top:284px;transform:scaleX(1.12)">Plan</div>
<div class="lbl" style="left:340px;top:346px;transform:scaleX(1.135)">Ön Görünüş</div>
<div class="lbl" style="left:528.8px;top:346px;transform:scaleX(1.135)">Yan Görünüş</div>

<!--LOGO-->
<svg id="logo" width="800" height="419" viewBox="0 0 800 419" style="position:absolute;left:0;top:0">
<!-- legs -->
<path d="M726,355 Q718,358 715,362 L712.5,366.5 L717.5,368.5 L720,364.5 Q726,361.5 733,359.5 Z" fill="#2a8fd9" stroke="#1b4f7a" stroke-width="0.6"/>
<path d="M712.5,365 L717.5,366.5 L716.5,369 L711.5,367.5Z" fill="#3b4654"/>
<path d="M711.8,367.5 Q707.5,371.5 711,373 L719,371.5 L717.5,368.5 Z" fill="#2a8fd9" stroke="#1b4f7a" stroke-width="0.6"/>
<path d="M731,357.5 Q741,358.5 744,362.5 L746.5,366.5 L741.5,368 L738.5,363.5 Q734,361 728,360.5 Z" fill="#2a8fd9" stroke="#1b4f7a" stroke-width="0.6"/>
<path d="M741.2,366 L746.5,364.8 L747.5,367.5 L742,368.8Z" fill="#3b4654"/>
<path d="M742,368.5 L747.5,367.3 Q751.5,371 750.5,375.5 Q747,376 744.5,372.5 Z" fill="#2a8fd9" stroke="#1b4f7a" stroke-width="0.6"/>
<!-- torso -->
<path d="M723.5,337.5 Q731,334 740,337 L740,350 Q740.5,355 739,358.5 Q731,360.5 724.5,358 Q722.5,350 723.5,337.5 Z" fill="#2b90da" stroke="#1b4f7a" stroke-width="0.6"/>
<path d="M732,337 L732,358.5" stroke="#1d5f90" stroke-width="0.6"/>
<path d="M724,356 Q731,358 739.5,356" fill="none" stroke="#3b4654" stroke-width="1"/>
<!-- left arm -->
<path d="M725.5,337.5 Q717,340 711.5,344 L713,349 Q720,347 727.5,345 Z" fill="#2b90da" stroke="#1b4f7a" stroke-width="0.6"/>
<!-- right arm -->
<path d="M737,338 Q745,341.5 748,340.5 Q750.5,337 749,332.5 L753.5,332.5 Q756.5,341 751,346 Q744,348.5 737,345 Z" fill="#2b90da" stroke="#1b4f7a" stroke-width="0.6"/>
<!-- stick -->
<path d="M695.5,351.5 L766,324.8" stroke="#5e3a1c" stroke-width="3" stroke-linecap="round"/>
<path d="M695.5,351.5 L766,324.8" stroke="#9a6738" stroke-width="1.6" stroke-linecap="round"/>
<!-- hands -->
<ellipse cx="712.3" cy="346.5" rx="2.3" ry="2" fill="#b98558" stroke="#5e3a1c" stroke-width="0.5"/>
<ellipse cx="750.8" cy="331.3" rx="2.8" ry="2.4" fill="#f3c49a" stroke="#6b4424" stroke-width="0.5"/>
<!-- mop -->
<path d="M763,312 Q769,314 772,317 Q777,318 777.5,323 Q776,328 774,330 L773.5,336 L771,330 Q767,326 766,321 Q763,317 763,312 Z" fill="#f2c21a" stroke="#c48a0a" stroke-width="0.6"/>
<!-- face -->
<path d="M716.3,313.5 Q715.5,327 723,331.5 Q731,335.5 739.5,332.5 Q748.5,328 748.5,313.5 Z" fill="#f3c49c" stroke="#6b4424" stroke-width="0.7"/>
<ellipse cx="749" cy="320.5" rx="2" ry="3" fill="#f5c8a0" stroke="#6b4424" stroke-width="0.6"/>
<ellipse cx="725" cy="319.5" rx="3.8" ry="2.2" fill="#ffffff"/>
<ellipse cx="738" cy="319.5" rx="3.8" ry="2.2" fill="#ffffff"/>
<circle cx="725.5" cy="319.7" r="1.6" fill="#4aa8e0"/>
<circle cx="737.5" cy="319.7" r="1.6" fill="#4aa8e0"/>
<path d="M721,317.5 L729,318 M734,318 L742,317.5" stroke="#2d2d2d" stroke-width="0.9"/>
<path d="M729.5,322.5 Q731,324 732.5,323" fill="none" stroke="#a0643a" stroke-width="0.5"/>
<path d="M725,326.5 Q731,330 737,326.5" fill="none" stroke="#6b4424" stroke-width="0.7"/>
<!-- hair -->
<path d="M717.3,308 L717.6,303 L719,300.5 L718.6,298.5 L721,298 Q724,294.5 727,294 L728.5,292.3 L731,293 Q734,291.5 737,292 L739,291.2 L740.5,293.2 Q744,294.5 746,297 L748,297.2 L747.5,299.5 Q749.5,302.5 750,305.5 L750.6,308 Z" fill="#f4be17" stroke="#8a5a10" stroke-width="0.7"/>
<path d="M721,307 Q722,301 725,297 M726.5,307.5 Q727.5,300 731,295 M733,307.5 Q734,300 737,294.5 M739.5,307.5 Q740.5,301 743,297 M745.5,307.5 Q746,303 747.5,300" fill="none" stroke="#e58e0c" stroke-width="1.1"/>
<!-- headband -->
<path d="M715.8,307.9 Q733,307.3 750.6,307.9 L750.5,314 Q733,314.5 716,315.3 Z" fill="#46484c" stroke="#2a2a2a" stroke-width="0.6"/>
<path d="M749.5,308.5 Q755,308.3 759.5,310.8 Q757.5,313 758.3,320 Q754.5,316.5 753.5,313.5 L750,313.5 Z" fill="#46484c" stroke="#2a2a2a" stroke-width="0.5"/>
<!-- text PislikMimar -->
<g fill="none" stroke="#1f84d0" stroke-width="2.4" stroke-linecap="round" stroke-linejoin="round">
<path d="M676.3,387.5 L676.4,373 Q684,372.5 687.5,374.5 Q690.5,377.5 688,380.5 Q684.5,383 677,382"/>
<path d="M690.3,388.5 L690.6,391.5"/>
<circle cx="689.8" cy="384.3" r="0.6"/>
<path d="M701,387 Q695.5,386 694.5,388 Q697,389.5 700.5,390.5 Q701.5,393.5 696,393"/>
<path d="M704.5,382 L706,394"/>
<path d="M710.8,387 L711.2,393"/>
<circle cx="710.6" cy="383" r="0.7"/>
<path d="M716,380 L716.8,393 M722.5,385.5 L717.5,389 L723.5,393.5"/>
<path d="M728.8,384.5 Q730,383 730.3,385 L731,393.5 M730.3,385 L736.4,387.5 L741.2,382.3 L746,396.5"/>
<path d="M749.8,392.5 L750.2,394.5"/>
<path d="M752,394 Q754,386 756.5,389 L758,392 Q760,385 763,388 L764.5,392 Q766.5,386 769,388"/>
<path d="M776.5,385 Q769,383 767.5,388.5 Q768,392.5 773,389.5 L777.5,384.5 L778.5,390"/>
<path d="M779,390 Q780,385 783,383 Q786,380 790.3,378.8"/>
</g>
</svg>

<!--/LOGO-->
</body></html>
